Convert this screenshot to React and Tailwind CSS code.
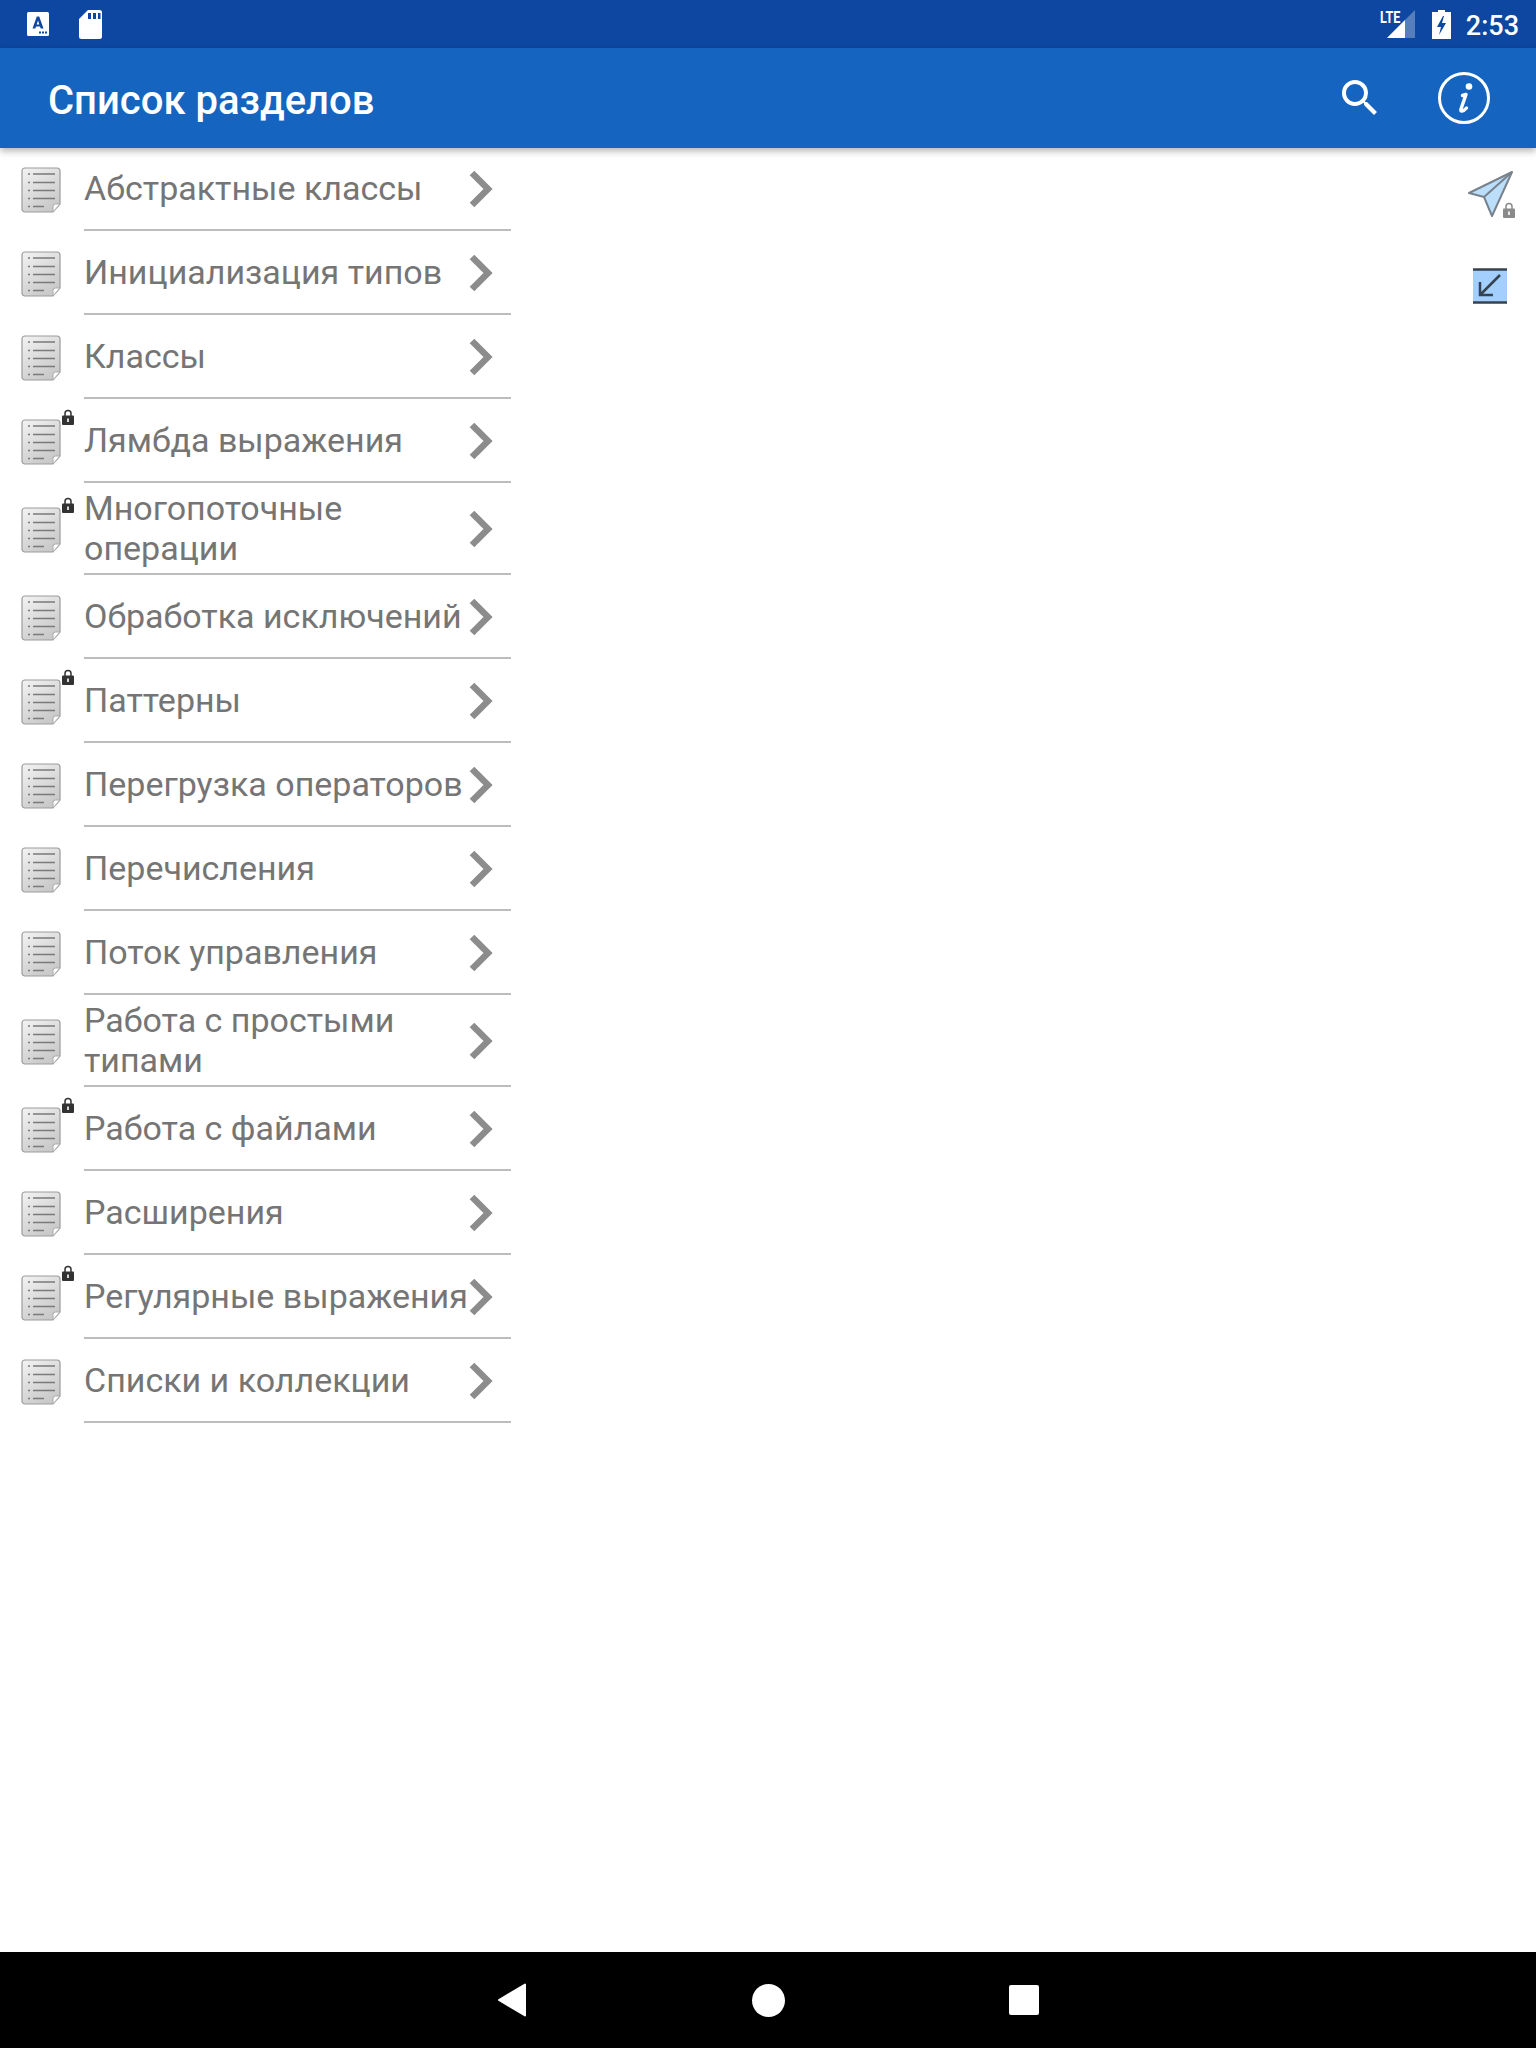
import React from "react";

const items = [
  ["Абстрактные классы", false],
  ["Инициализация типов", false],
  ["Классы", false],
  ["Лямбда выражения", true],
  ["Многопоточные операции", true],
  ["Обработка исключений", false],
  ["Паттерны", true],
  ["Перегрузка операторов", false],
  ["Перечисления", false],
  ["Поток управления", false],
  ["Работа с простыми типами", false],
  ["Работа с файлами", true],
  ["Расширения", false],
  ["Регулярные выражения", true],
  ["Списки и коллекции", false],
];

function DocIcon({ id }) {
  return (
    <svg width="40" height="46" viewBox="0 0 40 46" className="block">
      <defs>
        <linearGradient id={id} x1="0" y1="0" x2="0.6" y2="1">
          <stop offset="0" stopColor="#f3f3f3" />
          <stop offset="1" stopColor="#c9c9c9" />
        </linearGradient>
      </defs>
      <path d="M4 1H36A3 3 0 0 1 39 4V37L32 45H4A3 3 0 0 1 1 42V4A3 3 0 0 1 4 1Z" fill={`url(#${id})`} stroke="#9c9c9c" strokeWidth="1.200" />
      <path d="M39 37H34.500A2.500 2.500 0 0 0 32 39.500V45Z" fill="#fdfdfd" stroke="#a8a8a8" strokeWidth="1" />
      <g stroke="#7a7a7a" strokeWidth="1.600">
        <path d="M7 7h2M12 7h22M7 15.500h2M12 15.500h22M7 23.500h2M12 23.500h22M7 31.500h2M12 31.500h22M7 39.500h2M12 39.500h11" />
      </g>
    </svg>
  );
}

function Lock({ fill = "#333333", hole = "#ffffff", width = 12, height = 16 }) {
  return (
    <svg width={width} height={height} viewBox="0 0 12 16" className="block">
      <path d="M3 7V4.500a3 3 0 0 1 6 0V7" fill="none" stroke={fill} strokeWidth="1.500" />
      <rect x="0" y="6.500" width="12" height="9.500" rx="1" fill={fill} />
      <rect x="5.200" y="9.500" width="1.600" height="3.500" fill={hole} />
    </svg>
  );
}

function Row({ title, locked, i }) {
  return (
    <div className="flex w-[511px] items-stretch">
      <div className="flex w-[84px] shrink-0 items-center justify-start pl-[21px]">
        <div className="relative translate-y-px">
          <DocIcon id={`doc-${i}`} />
          {locked && (
            <div className="absolute left-[41px] top-[-10px]">
              <Lock />
            </div>
          )}
        </div>
      </div>
      <div className="flex min-h-[84px] flex-1 items-center border-b-2 border-[#bdbdbd] py-[5px]">
        <div className="w-[385px] shrink-0 text-[34px] leading-[40px] text-[#757575]">{title}</div>
        <svg width="26" height="40" viewBox="0 0 26 40" className="ml-[-1px] block shrink-0 translate-y-px">
          <path d="M4 4L20 20L4 36" fill="none" stroke="#8c8c8c" strokeWidth="6.500" />
        </svg>
      </div>
    </div>
  );
}

export default function App() {
  return (
    <div className="flex h-[2048px] w-[1536px] flex-col overflow-hidden bg-white font-['Roboto',sans-serif]">
      {/* status bar */}
      <div className="flex h-[48px] shrink-0 items-center justify-between bg-[#0d47a1] pl-[27px] pr-[17px]">
        <div className="flex items-center gap-[30px]">
          <svg width="22" height="24" viewBox="0 0 22 24" className="block">
            <rect width="22" height="24" rx="1.500" fill="#fff" />
            <path d="M5.500 16.500L9.800 4.500H12.200L16.500 16.500H13.700L13 14.400H9L8.300 16.500ZM9.700 12.400H12.300L11 8.400Z" fill="#0d47a1" />
            <path d="M12 19.500h2v2h-2zM15 19.500h2v2h-2zM18 19.500h2v2h-2z" fill="#0d47a1" />
          </svg>
          <svg width="23" height="29" viewBox="0 0 23 29" className="block">
            <path d="M9 0H20.500A2.500 2.500 0 0 1 23 2.500V26.500A2.500 2.500 0 0 1 20.500 29H2.500A2.500 2.500 0 0 1 0 26.500V9Z" fill="#fff" />
            <path d="M9 3h3v6H9zM14 3h3v6h-3zM19 3h2.500v6H19z" fill="#0d47a1" />
          </svg>
        </div>
        <div className="flex items-center">
          <div className="relative h-[28px] w-[28px]">
            <span className="absolute left-[-7px] top-[-2px] origin-top-left scale-x-[0.74] text-[17px] font-bold leading-[18px] text-white">LTE</span>
            <svg width="28" height="28" viewBox="0 0 28 28" className="block">
              <path d="M28 0V28H0Z" fill="#fff" fillOpacity="0.3" />
              <path d="M18 10V28H0Z" fill="#fff" />
            </svg>
          </div>
          <svg width="19" height="29" viewBox="0 0 19 29" className="ml-[17px] block">
            <path d="M6 0H13V2H19V29H0V2H6Z" fill="#fff" />
            <path d="M11 6L5 17H9L7 25L14 13H10L12 6Z" fill="#0d47a1" />
          </svg>
          <span className="ml-[15px] translate-y-[2px] text-[27px] font-medium leading-[32px] text-white">2:53</span>
        </div>
      </div>

      {/* app bar */}
      <div className="relative z-10 flex h-[100px] shrink-0 items-center justify-between bg-[#1565c0] pl-[48px] pr-[46px] shadow-[0_3px_7px_rgba(0,0,0,0.3)]">
        <div className="translate-y-[3px] text-[40px] font-medium leading-[48px] text-white">Список разделов</div>
        <div className="flex items-center gap-[54px]">
          <svg width="48" height="48" viewBox="0 0 24 24" className="block">
            <path fill="#fff" d="M15.500 14h-.79l-.28-.27A6.471 6.471 0 0 0 16 9.500 6.500 6.500 0 1 0 9.500 16c1.610 0 3.090-.59 4.230-1.570l.27.28v.79l5 4.990L20.490 19l-4.990-5zm-6 0C7.010 14 5 11.990 5 9.500S7.010 5 9.500 5 14 7.010 14 9.500 11.990 14 9.500 14z" />
          </svg>
          <svg width="52" height="52" viewBox="0 0 52 52" className="block">
            <circle cx="26" cy="26" r="24.500" fill="none" stroke="#fff" strokeWidth="3" />
            <circle cx="31" cy="14.500" r="3.300" fill="#fff" />
            <path d="M24.500 23.500L28 22.500L23 37C22 40 25 40 28.500 36" fill="none" stroke="#fff" strokeWidth="3.400" strokeLinecap="round" strokeLinejoin="round" />
          </svg>
        </div>
      </div>

      {/* content */}
      <div className="flex min-h-0 flex-1 justify-between">
        <div className="-mt-px flex flex-col">
          {items.map(([title, locked], i) => (
            <Row key={title} title={title} locked={locked} i={i} />
          ))}
        </div>
        <div className="flex flex-col items-center pr-[20px] pt-[21px]">
          <svg width="48" height="50" viewBox="0 0 48 50" className="block">
            <path d="M1 24L44 3L24 47L16 28Z" fill="#bbdefb" stroke="#78828c" strokeWidth="2" strokeLinejoin="round" />
            <path d="M16 28L44 3" fill="none" stroke="#78828c" strokeWidth="2" />
            <svg x="35" y="33" width="12" height="16" viewBox="0 0 12 16">
              <path d="M3 7V4.500a3 3 0 0 1 6 0V7" fill="none" stroke="#8a8a8a" strokeWidth="1.500" />
              <rect x="0" y="6.500" width="12" height="9.500" rx="1" fill="#8a8a8a" />
              <rect x="5.200" y="9.500" width="1.600" height="3.500" fill="#ffffff" />
            </svg>
          </svg>
          <svg width="34" height="36" viewBox="0 0 34 36" className="mt-[49px] block -translate-x-[2px]">
            <rect x="0" y="1" width="34" height="34" fill="#a2cffe" />
            <path d="M0 1.500h34M0 34.500h34" stroke="#37424f" strokeWidth="2.500" />
            <path d="M27 7L8 26M7 14V27H20" fill="none" stroke="#37424f" strokeWidth="2.500" />
          </svg>
        </div>
      </div>

      {/* nav bar */}
      <div className="flex h-[96px] shrink-0 items-center justify-center bg-black">
        <div className="flex w-[256px] items-center justify-center">
          <svg width="30" height="34" viewBox="0 0 30 34" className="block">
            <path d="M28 1.500V32.500L2 17Z" fill="#fff" stroke="#fff" strokeWidth="2" strokeLinejoin="round" />
          </svg>
        </div>
        <div className="flex w-[256px] items-center justify-center">
          <div className="h-[33px] w-[33px] rounded-full bg-white" />
        </div>
        <div className="flex w-[256px] items-center justify-center">
          <div className="h-[30px] w-[30px] rounded-[2px] bg-white" />
        </div>
      </div>
    </div>
  );
}
